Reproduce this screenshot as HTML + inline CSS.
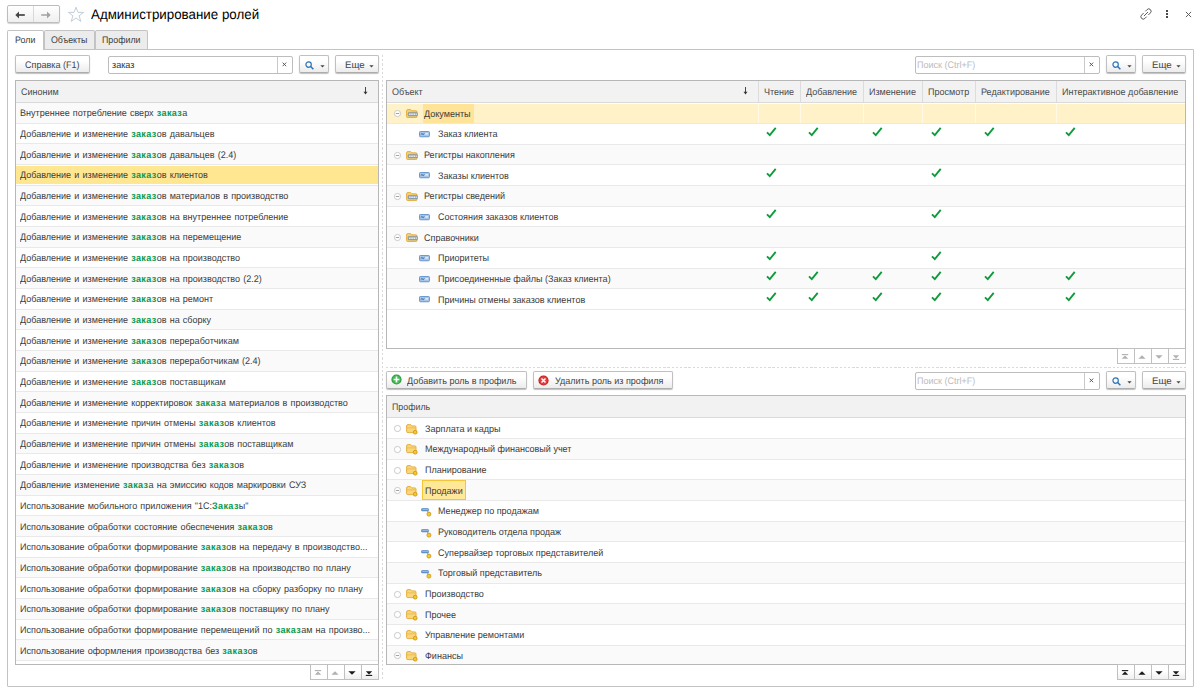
<!DOCTYPE html>
<html lang="ru"><head><meta charset="utf-8"><title>Администрирование ролей</title>
<style>
*{box-sizing:border-box;margin:0;padding:0}
html,body{width:1200px;height:689px;overflow:hidden;background:#fff}
body{font-family:"Liberation Sans",Arial,sans-serif;font-size:9.5px;color:#3c3c3c;position:relative;text-rendering:geometricPrecision}
div,span,svg{position:absolute}
b{color:#0a9a50;font-weight:bold;letter-spacing:.42px}
.x{top:50%;height:12px;line-height:12px;margin-top:-6px;white-space:nowrap;transform:scaleX(0.95);transform-origin:0 50%}
.x b{position:static}
.lw{word-spacing:.7px}
.nav{left:7px;top:5px;width:53px;height:18px;border:1px solid #bdbdbd;border-radius:2px;background:linear-gradient(#fff,#efefef);box-shadow:0 1px 1px rgba(0,0,0,.18)}
.navl{left:0;top:0;width:26px;height:16px;border-right:1px solid #d9d9d9}
.navl svg{left:7px;top:4.5px}
.navr svg{left:7px;top:4.5px}
.navr{left:26px;top:0;width:25px;height:16px}
.star{left:66.5px;top:5.5px}
.title{left:91px;top:6px;height:18px;width:300px;font-size:13.8px;color:#000}
.xt{left:0;top:0;height:18px;line-height:18px;white-space:nowrap;transform:scaleX(.967);transform-origin:0 50%}
.lnk{left:1139.5px;top:8px}
.dots{left:1165.6px;top:10px;width:3px;height:9px}
.dots i{position:absolute;left:0;width:2.3px;height:2px;background:#4a4a4a}
.dots i:nth-child(1){top:0}.dots i:nth-child(2){top:3px}.dots i:nth-child(3){top:6px}
.cls{left:1184.8px;top:10.8px}
.panel{left:7px;top:49px;width:1187px;height:638px;border:1px solid #c3c3c3;border-radius:0 0 1px 1px}
.tab{top:30px;height:19px;border:1px solid #c3c3c3;border-bottom:none;background:#ececec;border-radius:2px 2px 0 0}
.tab .x{margin-top:-5px}
.tab.on{background:#fff;border-bottom:none;height:20px}
.tab.on .x{margin-top:-6px}
.btn{border:1px solid #c0c0c0;border-radius:2px;background:linear-gradient(#fff 30%,#ececec);border-bottom-color:#adadad;box-shadow:0 1px 1px rgba(0,0,0,.25);color:#444}
.btn .x{margin-top:-4.2px}
.btn .mg{left:4.6px;top:4.6px;width:10px;height:10px}
.btn .mg svg{left:0;top:0}
.btn .ct{top:8.5px;width:5px;height:3px}
.btn .ct svg{left:0;top:0}
.btn .bi{left:3.7px;top:2.2px}
.inp{border:1px solid #bdbdbd;border-radius:2px;background:#fff}
.inp .x{margin-top:-4.6px}
.inp .val{color:#333}
.inp .ph{color:#bcbcbc}
.inp .clr{right:0;top:0;width:15px;height:16px;border-left:1px solid #c9c9c9}
.inp .clr svg{left:4.2px;top:5px}
.tbl{border:1px solid #b7b7b7;background:#fff;overflow:hidden}
.hd{background:#f2f2f2;border-bottom:1px solid #dadada;color:#4a4a4a}
.hd .x{margin-top:-4.8px}
.hd2 .x{margin-top:-4.4px}
.hd .hdv{top:0;width:1px;height:100%;background:#dcdcdc}
.hd .srt{top:6px;width:5px;height:8px}
.hd .srt svg{left:0;top:0}
.r{left:0;border-bottom:1px solid #e9e9e9;background:#fff}
.r.alt{background:#fafafa}
.r.sel{background:#fff;border-bottom-color:#e6e6ee}
.r.sel .bg{left:0;right:0;top:1px;bottom:1px;background:#ffe691}
.r.sel2{background:#fff;border-bottom-color:#e9e9ee}
.r.sel2 .bg{left:0;right:0;top:1px;bottom:0;background:#fff2c9}
.r .t{margin-top:0}
.ic{line-height:0}
.ic svg{position:static;display:block}
.cd{top:1px;bottom:0;width:1px;background:#fff9e6}
.cur{top:1px;bottom:0;background:#ffe497}
.cur2{top:0;bottom:0;background:#ffe897;border:1px solid #f5c535}
.vsep{left:382px;top:55px;width:1px;height:625px;background:repeating-linear-gradient(180deg,#dadada 0,#dadada 2.2px,transparent 2.2px,transparent 4.2px)}
.hsep{left:386px;top:367px;width:800px;height:1px;background:repeating-linear-gradient(90deg,#dadada 0,#dadada 2.4px,transparent 2.4px,transparent 4.2px)}
.sb{width:69px;height:16px}
.sbb{top:0;height:16px;border:1px solid #c0c0c0;background:#fff}
.sbb.act{background:linear-gradient(#fff 40%,#f0f0f0)}
.sbb svg{left:3.4px;top:4.5px}
</style></head>
<body>
<div class="nav"><div class="navl"><svg width="10" height="8" viewBox="0 0 10 8"><path d="M0.3 4L4 0.5V7.5z" fill="#444"/><path d="M3 4H9.8" stroke="#444" stroke-width="1.7"/></svg></div><div class="navr"><svg width="10" height="8" viewBox="0 0 10 8"><path d="M9.7 4L6 0.5V7.5z" fill="#a2a2a2"/><path d="M7 4H0.2" stroke="#a2a2a2" stroke-width="1.5"/></svg></div></div>
<svg class="star" width="18" height="17" viewBox="0 0 18 17"><path d="M9 1.2L11 6.4H16.6L12.1 9.8L13.8 15.4L9 12L4.2 15.4L5.9 9.8L1.4 6.4H7Z" fill="#fff" stroke="#bcc7d1" stroke-width="0.9" stroke-linejoin="miter"/></svg>
<div class="title"><span class="xt">Администрирование ролей</span></div>
<svg class="lnk" width="12" height="12" viewBox="0 0 13 13"><g fill="none" stroke="#555" stroke-width="1.05" stroke-linecap="round"><path d="M6.1 3.3L7.7 1.7a2.5 2.5 0 0 1 3.6 3.6L9.3 7.3"/><path d="M6.9 9.7L5.3 11.3a2.5 2.5 0 0 1 -3.6 -3.6L3.7 5.7"/><path d="M4.6 8.4L8.4 4.6"/></g></svg>
<div class="dots"><i></i><i></i><i></i></div>
<svg class="cls" width="7" height="7" viewBox="0 0 7 7"><path d="M0.9 0.9L6.1 6.1M6.1 0.9L0.9 6.1" stroke="#555" stroke-width="0.95"/></svg>
<div class="panel"></div>
<div class="tab on" style="left:7px;width:37px"><span class="x" style="left:7px;transform:scaleX(.93)">Роли</span></div>
<div class="tab" style="left:44px;width:51px"><span class="x" style="left:5.5px;transform:scaleX(.93)">Объекты</span></div>
<div class="tab" style="left:95px;width:53px"><span class="x" style="left:6px;transform:scaleX(.93)">Профили</span></div>
<div class="btn" style="left:15px;top:55px;width:75px;height:18px"><span class="x" style="left:9px;">Справка (F1)</span></div>
<div class="inp" style="left:108px;top:56px;width:185px;height:18px"><span class="x val" style="left:3px;">заказ</span><span class="clr"><svg width="5" height="5" viewBox="0 0 5 5"><path d="M0.6 0.6L4.2 4.2M4.2 0.6L0.6 4.2" stroke="#555" stroke-width="0.95"/></svg></span></div>
<div class="btn" style="left:299px;top:55px;width:30px;height:18px"><span class="mg"><svg width="10" height="10" viewBox="0 0 10 10"><circle cx="3.6" cy="3.6" r="2.7" fill="none" stroke="#2a72b5" stroke-width="1.15"/><path d="M5.6 5.6L8.4 8.3" stroke="#2a72b5" stroke-width="1.45"/></svg></span><span class="ct" style="left:20px"><svg width="5" height="3" viewBox="0 0 5 3"><path d="M0.4 0.3h4.2L2.5 2.4z" fill="#444"/></svg></span></div>
<div class="btn" style="left:335px;top:55px;width:44px;height:18px"><span class="x" style="left:9px;transform:scaleX(1.02)">Еще</span><span class="ct" style="left:32.7px"><svg width="5" height="3" viewBox="0 0 5 3"><path d="M0.4 0.3h4.2L2.5 2.4z" fill="#444"/></svg></span></div>
<div class="tbl" style="left:15px;top:80px;width:364px;height:585px">
<div class="hd" style="left:0;top:0;width:362px;height:22px"><span class="x" style="left:5px;">Синоним</span><span class="srt" style="left:346.5px"><svg width="5" height="8" viewBox="0 0 5 8"><path d="M2.5 0v6" stroke="#333" stroke-width="0.9"/><path d="M0.5 4.8h4L2.5 7.6z" fill="#333"/></svg></span></div>
<div class="r alt" style="top:22px;height:21px;width:362px"><span class="x t lw" style="left:4.0px;top:5px">Внутреннее потребление сверх <b>заказ</b>а</span></div>
<div class="r" style="top:43px;height:20px;width:362px"><span class="x t lw" style="left:4.0px;top:5px">Добавление и изменение <b>заказ</b>ов давальцев</span></div>
<div class="r alt" style="top:63px;height:21px;width:362px"><span class="x t lw" style="left:4.0px;top:6px">Добавление и изменение <b>заказ</b>ов давальцев (2.4)</span></div>
<div class="r sel" style="top:84px;height:21px;width:362px"><span class="bg"></span><span class="x t lw" style="left:4.0px;top:5px">Добавление и изменение <b>заказ</b>ов клиентов</span></div>
<div class="r alt" style="top:105px;height:20px;width:362px"><span class="x t lw" style="left:4.0px;top:5px">Добавление и изменение <b>заказ</b>ов материалов в производство</span></div>
<div class="r" style="top:125px;height:21px;width:362px"><span class="x t lw" style="left:4.0px;top:6px">Добавление и изменение <b>заказ</b>ов на внутреннее потребление</span></div>
<div class="r alt" style="top:146px;height:21px;width:362px"><span class="x t lw" style="left:4.0px;top:5px">Добавление и изменение <b>заказ</b>ов на перемещение</span></div>
<div class="r" style="top:167px;height:20px;width:362px"><span class="x t lw" style="left:4.0px;top:5px">Добавление и изменение <b>заказ</b>ов на производство</span></div>
<div class="r alt" style="top:187px;height:21px;width:362px"><span class="x t lw" style="left:4.0px;top:6px">Добавление и изменение <b>заказ</b>ов на производство (2.2)</span></div>
<div class="r" style="top:208px;height:21px;width:362px"><span class="x t lw" style="left:4.0px;top:5px">Добавление и изменение <b>заказ</b>ов на ремонт</span></div>
<div class="r alt" style="top:229px;height:20px;width:362px"><span class="x t lw" style="left:4.0px;top:5px">Добавление и изменение <b>заказ</b>ов на сборку</span></div>
<div class="r" style="top:249px;height:21px;width:362px"><span class="x t lw" style="left:4.0px;top:6px">Добавление и изменение <b>заказ</b>ов переработчикам</span></div>
<div class="r alt" style="top:270px;height:21px;width:362px"><span class="x t lw" style="left:4.0px;top:5px">Добавление и изменение <b>заказ</b>ов переработчикам (2.4)</span></div>
<div class="r" style="top:291px;height:20px;width:362px"><span class="x t lw" style="left:4.0px;top:5px">Добавление и изменение <b>заказ</b>ов поставщикам</span></div>
<div class="r alt" style="top:311px;height:21px;width:362px"><span class="x t lw" style="left:4.0px;top:6px">Добавление и изменение корректировок <b>заказ</b>а материалов в производство</span></div>
<div class="r" style="top:332px;height:21px;width:362px"><span class="x t lw" style="left:4.0px;top:5px">Добавление и изменение причин отмены <b>заказ</b>ов клиентов</span></div>
<div class="r alt" style="top:353px;height:20px;width:362px"><span class="x t lw" style="left:4.0px;top:5px">Добавление и изменение причин отмены <b>заказ</b>ов поставщикам</span></div>
<div class="r" style="top:373px;height:21px;width:362px"><span class="x t lw" style="left:4.0px;top:6px">Добавление и изменение производства без <b>заказ</b>ов</span></div>
<div class="r alt" style="top:394px;height:21px;width:362px"><span class="x t lw" style="left:4.0px;top:5px">Добавление изменение <b>заказ</b>а на эмиссию кодов маркировки СУЗ</span></div>
<div class="r" style="top:415px;height:20px;width:362px"><span class="x t lw" style="left:4.0px;top:5px">Использование мобильного приложения "1С:<b>Заказ</b>ы"</span></div>
<div class="r alt" style="top:435px;height:21px;width:362px"><span class="x t lw" style="left:4.0px;top:6px">Использование обработки состояние обеспечения <b>заказ</b>ов</span></div>
<div class="r" style="top:456px;height:21px;width:362px"><span class="x t lw" style="left:4.0px;top:5px">Использование обработки формирование <b>заказ</b>ов на передачу в производство...</span></div>
<div class="r alt" style="top:477px;height:20px;width:362px"><span class="x t lw" style="left:4.0px;top:5px">Использование обработки формирование <b>заказ</b>ов на производство по плану</span></div>
<div class="r" style="top:497px;height:21px;width:362px"><span class="x t lw" style="left:4.0px;top:6px">Использование обработки формирование <b>заказ</b>ов на сборку разборку по плану</span></div>
<div class="r alt" style="top:518px;height:21px;width:362px"><span class="x t lw" style="left:4.0px;top:5px">Использование обработки формирование <b>заказ</b>ов поставщику по плану</span></div>
<div class="r" style="top:539px;height:20px;width:362px"><span class="x t lw" style="left:4.0px;top:5px">Использование обработки формирование перемещений по <b>заказ</b>ам на произво...</span></div>
<div class="r alt" style="top:559px;height:21px;width:362px"><span class="x t lw" style="left:4.0px;top:6px">Использование оформления производства без <b>заказ</b>ов</span></div>
<div class="r" style="top:580px;height:21px;width:362px"></div>
</div>
<div class="sb" style="left:310px;top:664px"><div class="sbb" style="left:0px;width:18px"><svg width="8" height="6" viewBox="0 0 8 6" fill="#b0b0b0" stroke="#b0b0b0"><path d="M0.8 0.6h6.4" fill="none" stroke-width="1.1"/><path d="M0.8 4.8L4 1.4L7.2 4.8z" stroke="none"/></svg></div><div class="sbb" style="left:17px;width:18px"><svg width="8" height="6" viewBox="0 0 8 6" fill="#b0b0b0" stroke="#b0b0b0"><path d="M0.4 4.8L4 1.2L7.6 4.8z" stroke="none"/></svg></div><div class="sbb act" style="left:34px;width:18px"><svg width="8" height="6" viewBox="0 0 8 6" fill="#1a1a1a" stroke="#1a1a1a"><path d="M0.4 1.2L4 4.8L7.6 1.2z" stroke="none"/></svg></div><div class="sbb act" style="left:51px;width:18px"><svg width="8" height="6" viewBox="0 0 8 6" fill="#1a1a1a" stroke="#1a1a1a"><path d="M0.8 5.4h6.4" fill="none" stroke-width="1.1"/><path d="M0.8 1.2L4 4.6L7.2 1.2z" stroke="none"/></svg></div></div>
<div class="vsep"></div>
<div class="hsep"></div>
<div class="inp" style="left:915px;top:56px;width:185px;height:18px"><span class="x ph" style="left:1px;">Поиск (Ctrl+F)</span><span class="clr"><svg width="5" height="5" viewBox="0 0 5 5"><path d="M0.6 0.6L4.2 4.2M4.2 0.6L0.6 4.2" stroke="#555" stroke-width="0.95"/></svg></span></div>
<div class="btn" style="left:1106px;top:55px;width:30px;height:18px"><span class="mg"><svg width="10" height="10" viewBox="0 0 10 10"><circle cx="3.6" cy="3.6" r="2.7" fill="none" stroke="#2a72b5" stroke-width="1.15"/><path d="M5.6 5.6L8.4 8.3" stroke="#2a72b5" stroke-width="1.45"/></svg></span><span class="ct" style="left:20px"><svg width="5" height="3" viewBox="0 0 5 3"><path d="M0.4 0.3h4.2L2.5 2.4z" fill="#444"/></svg></span></div>
<div class="btn" style="left:1142px;top:55px;width:44px;height:18px"><span class="x" style="left:9px;transform:scaleX(1.02)">Еще</span><span class="ct" style="left:32.7px"><svg width="5" height="3" viewBox="0 0 5 3"><path d="M0.4 0.3h4.2L2.5 2.4z" fill="#444"/></svg></span></div>
<div class="tbl" style="left:386px;top:80px;width:800px;height:269px">
<div class="hd" style="left:0;top:0;width:798px;height:22px">
<span class="x" style="left:5px;">Объект</span>
<span class="srt" style="left:356px"><svg width="5" height="8" viewBox="0 0 5 8"><path d="M2.5 0v6" stroke="#333" stroke-width="0.9"/><path d="M0.5 4.8h4L2.5 7.6z" fill="#333"/></svg></span>
<span class="hdv" style="left:371px"></span><span class="x" style="left:377px;">Чтение</span>
<span class="hdv" style="left:413px"></span><span class="x" style="left:419px;">Добавление</span>
<span class="hdv" style="left:476px"></span><span class="x" style="left:482px;">Изменение</span>
<span class="hdv" style="left:535px"></span><span class="x" style="left:541px;">Просмотр</span>
<span class="hdv" style="left:588px"></span><span class="x" style="left:594px;">Редактирование</span>
<span class="hdv" style="left:669px"></span><span class="x" style="left:675px;">Интерактивное добавление</span>
</div>
<div class="r sel2" style="top:22px;height:21px;width:798px">
<span class="bg"></span>
<span class="ic" style="left:6px;top:6px"><svg width="9" height="9" viewBox="0 0 9 9"><circle cx="4.5" cy="4.5" r="3.1" fill="#fff" stroke="#c2c2c2" stroke-width="0.85"/><path d="M2.8 4.5h3.4" stroke="#999" stroke-width="0.9"/></svg></span><span class="ic" style="left:19px;top:6px"><svg width="12" height="9.3" viewBox="0 0 12.6 9.8"><path d="M0.6 2Q0.6 0.6 2 0.6H4.4Q5.2 0.6 5.6 1.3L6 1.9H10.4Q11.6 1.9 11.6 3.1V7.9Q11.6 9 10.4 9H1.8Q0.6 9 0.6 7.9Z" fill="#f8d16f" stroke="#e3a72e" stroke-width="0.9"/><rect x="2.2" y="3.6" width="9.8" height="3.7" rx="0.9" fill="#93a4b8" stroke="#7d8da0" stroke-width="0.6"/><path d="M3.3 5.45h1.5M5.6 5.45h1.5M7.9 5.45h1.5M10.2 5.45h1" stroke="#eef3f8" stroke-width="1.5"/></svg></span>
<span class="cur" style="left:36px;width:51px"></span>
<span class="x t" style="left:37px;top:6px">Документы</span>
<span class="cd" style="left:371px"></span>
<span class="cd" style="left:413px"></span>
<span class="cd" style="left:476px"></span>
<span class="cd" style="left:535px"></span>
<span class="cd" style="left:588px"></span>
<span class="cd" style="left:669px"></span>
</div>
<div class="r" style="top:43px;height:21px;width:798px">
<span class="ic" style="left:32px;top:7px"><svg width="11" height="7" viewBox="0 0 11 7"><rect x="0.45" y="0.45" width="10" height="5.3" rx="1" fill="#a9c6e8" stroke="#5b8cc7" stroke-width="0.9"/><path d="M1.7 3.7L2.9 2.5L4.1 3.6L5.4 2.4" stroke="#26589b" stroke-width="0.9" fill="none"/><path d="M6.3 2.9h2.9" stroke="#fff" stroke-width="1"/></svg></span><span class="x t" style="left:51px;top:5px">Заказ клиента</span>
<span class="ic" style="left:379px;top:3px"><svg width="11" height="10" viewBox="0 0 11 10"><path d="M1 5.3L3.8 8.2L9.7 0.9" fill="none" stroke="#0f9a3c" stroke-width="1.85"/></svg></span>
<span class="ic" style="left:421px;top:3px"><svg width="11" height="10" viewBox="0 0 11 10"><path d="M1 5.3L3.8 8.2L9.7 0.9" fill="none" stroke="#0f9a3c" stroke-width="1.85"/></svg></span>
<span class="ic" style="left:485px;top:3px"><svg width="11" height="10" viewBox="0 0 11 10"><path d="M1 5.3L3.8 8.2L9.7 0.9" fill="none" stroke="#0f9a3c" stroke-width="1.85"/></svg></span>
<span class="ic" style="left:544px;top:3px"><svg width="11" height="10" viewBox="0 0 11 10"><path d="M1 5.3L3.8 8.2L9.7 0.9" fill="none" stroke="#0f9a3c" stroke-width="1.85"/></svg></span>
<span class="ic" style="left:597px;top:3px"><svg width="11" height="10" viewBox="0 0 11 10"><path d="M1 5.3L3.8 8.2L9.7 0.9" fill="none" stroke="#0f9a3c" stroke-width="1.85"/></svg></span>
<span class="ic" style="left:678px;top:3px"><svg width="11" height="10" viewBox="0 0 11 10"><path d="M1 5.3L3.8 8.2L9.7 0.9" fill="none" stroke="#0f9a3c" stroke-width="1.85"/></svg></span>
</div>
<div class="r alt" style="top:64px;height:20px;width:798px">
<span class="ic" style="left:6px;top:6px"><svg width="9" height="9" viewBox="0 0 9 9"><circle cx="4.5" cy="4.5" r="3.1" fill="#fff" stroke="#c2c2c2" stroke-width="0.85"/><path d="M2.8 4.5h3.4" stroke="#999" stroke-width="0.9"/></svg></span><span class="ic" style="left:19px;top:6px"><svg width="12" height="9.3" viewBox="0 0 12.6 9.8"><path d="M0.6 2Q0.6 0.6 2 0.6H4.4Q5.2 0.6 5.6 1.3L6 1.9H10.4Q11.6 1.9 11.6 3.1V7.9Q11.6 9 10.4 9H1.8Q0.6 9 0.6 7.9Z" fill="#f8d16f" stroke="#e3a72e" stroke-width="0.9"/><rect x="2.2" y="3.6" width="9.8" height="3.7" rx="0.9" fill="#93a4b8" stroke="#7d8da0" stroke-width="0.6"/><path d="M3.3 5.45h1.5M5.6 5.45h1.5M7.9 5.45h1.5M10.2 5.45h1" stroke="#eef3f8" stroke-width="1.5"/></svg></span>
<span class="x t" style="left:37px;top:5px">Регистры накопления</span>
</div>
<div class="r" style="top:84px;height:21px;width:798px">
<span class="ic" style="left:32px;top:7px"><svg width="11" height="7" viewBox="0 0 11 7"><rect x="0.45" y="0.45" width="10" height="5.3" rx="1" fill="#a9c6e8" stroke="#5b8cc7" stroke-width="0.9"/><path d="M1.7 3.7L2.9 2.5L4.1 3.6L5.4 2.4" stroke="#26589b" stroke-width="0.9" fill="none"/><path d="M6.3 2.9h2.9" stroke="#fff" stroke-width="1"/></svg></span><span class="x t" style="left:51px;top:6px">Заказы клиентов</span>
<span class="ic" style="left:379px;top:3px"><svg width="11" height="10" viewBox="0 0 11 10"><path d="M1 5.3L3.8 8.2L9.7 0.9" fill="none" stroke="#0f9a3c" stroke-width="1.85"/></svg></span>
<span class="ic" style="left:544px;top:3px"><svg width="11" height="10" viewBox="0 0 11 10"><path d="M1 5.3L3.8 8.2L9.7 0.9" fill="none" stroke="#0f9a3c" stroke-width="1.85"/></svg></span>
</div>
<div class="r alt" style="top:105px;height:21px;width:798px">
<span class="ic" style="left:6px;top:6px"><svg width="9" height="9" viewBox="0 0 9 9"><circle cx="4.5" cy="4.5" r="3.1" fill="#fff" stroke="#c2c2c2" stroke-width="0.85"/><path d="M2.8 4.5h3.4" stroke="#999" stroke-width="0.9"/></svg></span><span class="ic" style="left:19px;top:6px"><svg width="12" height="9.3" viewBox="0 0 12.6 9.8"><path d="M0.6 2Q0.6 0.6 2 0.6H4.4Q5.2 0.6 5.6 1.3L6 1.9H10.4Q11.6 1.9 11.6 3.1V7.9Q11.6 9 10.4 9H1.8Q0.6 9 0.6 7.9Z" fill="#f8d16f" stroke="#e3a72e" stroke-width="0.9"/><rect x="2.2" y="3.6" width="9.8" height="3.7" rx="0.9" fill="#93a4b8" stroke="#7d8da0" stroke-width="0.6"/><path d="M3.3 5.45h1.5M5.6 5.45h1.5M7.9 5.45h1.5M10.2 5.45h1" stroke="#eef3f8" stroke-width="1.5"/></svg></span>
<span class="x t" style="left:37px;top:5px">Регистры сведений</span>
</div>
<div class="r" style="top:126px;height:20px;width:798px">
<span class="ic" style="left:32px;top:7px"><svg width="11" height="7" viewBox="0 0 11 7"><rect x="0.45" y="0.45" width="10" height="5.3" rx="1" fill="#a9c6e8" stroke="#5b8cc7" stroke-width="0.9"/><path d="M1.7 3.7L2.9 2.5L4.1 3.6L5.4 2.4" stroke="#26589b" stroke-width="0.9" fill="none"/><path d="M6.3 2.9h2.9" stroke="#fff" stroke-width="1"/></svg></span><span class="x t" style="left:51px;top:5px">Состояния заказов клиентов</span>
<span class="ic" style="left:379px;top:2px"><svg width="11" height="10" viewBox="0 0 11 10"><path d="M1 5.3L3.8 8.2L9.7 0.9" fill="none" stroke="#0f9a3c" stroke-width="1.85"/></svg></span>
<span class="ic" style="left:544px;top:2px"><svg width="11" height="10" viewBox="0 0 11 10"><path d="M1 5.3L3.8 8.2L9.7 0.9" fill="none" stroke="#0f9a3c" stroke-width="1.85"/></svg></span>
</div>
<div class="r alt" style="top:146px;height:21px;width:798px">
<span class="ic" style="left:6px;top:6px"><svg width="9" height="9" viewBox="0 0 9 9"><circle cx="4.5" cy="4.5" r="3.1" fill="#fff" stroke="#c2c2c2" stroke-width="0.85"/><path d="M2.8 4.5h3.4" stroke="#999" stroke-width="0.9"/></svg></span><span class="ic" style="left:19px;top:6px"><svg width="12" height="9.3" viewBox="0 0 12.6 9.8"><path d="M0.6 2Q0.6 0.6 2 0.6H4.4Q5.2 0.6 5.6 1.3L6 1.9H10.4Q11.6 1.9 11.6 3.1V7.9Q11.6 9 10.4 9H1.8Q0.6 9 0.6 7.9Z" fill="#f8d16f" stroke="#e3a72e" stroke-width="0.9"/><rect x="2.2" y="3.6" width="9.8" height="3.7" rx="0.9" fill="#93a4b8" stroke="#7d8da0" stroke-width="0.6"/><path d="M3.3 5.45h1.5M5.6 5.45h1.5M7.9 5.45h1.5M10.2 5.45h1" stroke="#eef3f8" stroke-width="1.5"/></svg></span>
<span class="x t" style="left:37px;top:6px">Справочники</span>
</div>
<div class="r" style="top:167px;height:21px;width:798px">
<span class="ic" style="left:32px;top:7px"><svg width="11" height="7" viewBox="0 0 11 7"><rect x="0.45" y="0.45" width="10" height="5.3" rx="1" fill="#a9c6e8" stroke="#5b8cc7" stroke-width="0.9"/><path d="M1.7 3.7L2.9 2.5L4.1 3.6L5.4 2.4" stroke="#26589b" stroke-width="0.9" fill="none"/><path d="M6.3 2.9h2.9" stroke="#fff" stroke-width="1"/></svg></span><span class="x t" style="left:51px;top:5px">Приоритеты</span>
<span class="ic" style="left:379px;top:3px"><svg width="11" height="10" viewBox="0 0 11 10"><path d="M1 5.3L3.8 8.2L9.7 0.9" fill="none" stroke="#0f9a3c" stroke-width="1.85"/></svg></span>
<span class="ic" style="left:544px;top:3px"><svg width="11" height="10" viewBox="0 0 11 10"><path d="M1 5.3L3.8 8.2L9.7 0.9" fill="none" stroke="#0f9a3c" stroke-width="1.85"/></svg></span>
</div>
<div class="r alt" style="top:188px;height:20px;width:798px">
<span class="ic" style="left:32px;top:7px"><svg width="11" height="7" viewBox="0 0 11 7"><rect x="0.45" y="0.45" width="10" height="5.3" rx="1" fill="#a9c6e8" stroke="#5b8cc7" stroke-width="0.9"/><path d="M1.7 3.7L2.9 2.5L4.1 3.6L5.4 2.4" stroke="#26589b" stroke-width="0.9" fill="none"/><path d="M6.3 2.9h2.9" stroke="#fff" stroke-width="1"/></svg></span><span class="x t" style="left:51px;top:5px">Присоединенные файлы (Заказ клиента)</span>
<span class="ic" style="left:379px;top:2px"><svg width="11" height="10" viewBox="0 0 11 10"><path d="M1 5.3L3.8 8.2L9.7 0.9" fill="none" stroke="#0f9a3c" stroke-width="1.85"/></svg></span>
<span class="ic" style="left:421px;top:2px"><svg width="11" height="10" viewBox="0 0 11 10"><path d="M1 5.3L3.8 8.2L9.7 0.9" fill="none" stroke="#0f9a3c" stroke-width="1.85"/></svg></span>
<span class="ic" style="left:485px;top:2px"><svg width="11" height="10" viewBox="0 0 11 10"><path d="M1 5.3L3.8 8.2L9.7 0.9" fill="none" stroke="#0f9a3c" stroke-width="1.85"/></svg></span>
<span class="ic" style="left:544px;top:2px"><svg width="11" height="10" viewBox="0 0 11 10"><path d="M1 5.3L3.8 8.2L9.7 0.9" fill="none" stroke="#0f9a3c" stroke-width="1.85"/></svg></span>
<span class="ic" style="left:597px;top:2px"><svg width="11" height="10" viewBox="0 0 11 10"><path d="M1 5.3L3.8 8.2L9.7 0.9" fill="none" stroke="#0f9a3c" stroke-width="1.85"/></svg></span>
<span class="ic" style="left:678px;top:2px"><svg width="11" height="10" viewBox="0 0 11 10"><path d="M1 5.3L3.8 8.2L9.7 0.9" fill="none" stroke="#0f9a3c" stroke-width="1.85"/></svg></span>
</div>
<div class="r" style="top:208px;height:21px;width:798px">
<span class="ic" style="left:32px;top:7px"><svg width="11" height="7" viewBox="0 0 11 7"><rect x="0.45" y="0.45" width="10" height="5.3" rx="1" fill="#a9c6e8" stroke="#5b8cc7" stroke-width="0.9"/><path d="M1.7 3.7L2.9 2.5L4.1 3.6L5.4 2.4" stroke="#26589b" stroke-width="0.9" fill="none"/><path d="M6.3 2.9h2.9" stroke="#fff" stroke-width="1"/></svg></span><span class="x t" style="left:51px;top:6px">Причины отмены заказов клиентов</span>
<span class="ic" style="left:379px;top:3px"><svg width="11" height="10" viewBox="0 0 11 10"><path d="M1 5.3L3.8 8.2L9.7 0.9" fill="none" stroke="#0f9a3c" stroke-width="1.85"/></svg></span>
<span class="ic" style="left:421px;top:3px"><svg width="11" height="10" viewBox="0 0 11 10"><path d="M1 5.3L3.8 8.2L9.7 0.9" fill="none" stroke="#0f9a3c" stroke-width="1.85"/></svg></span>
<span class="ic" style="left:485px;top:3px"><svg width="11" height="10" viewBox="0 0 11 10"><path d="M1 5.3L3.8 8.2L9.7 0.9" fill="none" stroke="#0f9a3c" stroke-width="1.85"/></svg></span>
<span class="ic" style="left:544px;top:3px"><svg width="11" height="10" viewBox="0 0 11 10"><path d="M1 5.3L3.8 8.2L9.7 0.9" fill="none" stroke="#0f9a3c" stroke-width="1.85"/></svg></span>
<span class="ic" style="left:597px;top:3px"><svg width="11" height="10" viewBox="0 0 11 10"><path d="M1 5.3L3.8 8.2L9.7 0.9" fill="none" stroke="#0f9a3c" stroke-width="1.85"/></svg></span>
<span class="ic" style="left:678px;top:3px"><svg width="11" height="10" viewBox="0 0 11 10"><path d="M1 5.3L3.8 8.2L9.7 0.9" fill="none" stroke="#0f9a3c" stroke-width="1.85"/></svg></span>
</div>
</div>
<div class="sb" style="left:1117px;top:348px"><div class="sbb" style="left:0px;width:18px"><svg width="8" height="6" viewBox="0 0 8 6" fill="#b0b0b0" stroke="#b0b0b0"><path d="M0.8 0.6h6.4" fill="none" stroke-width="1.1"/><path d="M0.8 4.8L4 1.4L7.2 4.8z" stroke="none"/></svg></div><div class="sbb" style="left:17px;width:18px"><svg width="8" height="6" viewBox="0 0 8 6" fill="#b0b0b0" stroke="#b0b0b0"><path d="M0.4 4.8L4 1.2L7.6 4.8z" stroke="none"/></svg></div><div class="sbb" style="left:34px;width:18px"><svg width="8" height="6" viewBox="0 0 8 6" fill="#b0b0b0" stroke="#b0b0b0"><path d="M0.4 1.2L4 4.8L7.6 1.2z" stroke="none"/></svg></div><div class="sbb" style="left:51px;width:18px"><svg width="8" height="6" viewBox="0 0 8 6" fill="#b0b0b0" stroke="#b0b0b0"><path d="M0.8 5.4h6.4" fill="none" stroke-width="1.1"/><path d="M0.8 1.2L4 4.6L7.2 1.2z" stroke="none"/></svg></div></div>
<div class="btn" style="left:386px;top:371px;width:141px;height:18px"><svg class="bi" width="11" height="11" viewBox="0 0 11 11"><circle cx="5.5" cy="5.5" r="5.1" fill="#2c9b3c"/><circle cx="5.5" cy="5.5" r="4.2" fill="#45b755"/><path d="M5.5 2.6v5.8M2.6 5.5h5.8" stroke="#fff" stroke-width="1.7"/></svg><span class="x" style="left:19.8px;">Добавить роль в профиль</span></div>
<div class="btn" style="left:533px;top:371px;width:140px;height:18px"><svg class="bi" style="left:4.3px;top:2.7px" width="11" height="11" viewBox="0 0 11 11"><circle cx="5.5" cy="5.5" r="5.1" fill="#c41c1c"/><circle cx="5.5" cy="5.5" r="4.2" fill="#e33d3d"/><path d="M3.5 3.5l4 4M7.5 3.5L3.5 7.5" stroke="#fff" stroke-width="1.5"/></svg><span class="x" style="left:20.6px;">Удалить роль из профиля</span></div>
<div class="inp" style="left:915px;top:372px;width:185px;height:18px"><span class="x ph" style="left:1px;">Поиск (Ctrl+F)</span><span class="clr"><svg width="5" height="5" viewBox="0 0 5 5"><path d="M0.6 0.6L4.2 4.2M4.2 0.6L0.6 4.2" stroke="#555" stroke-width="0.95"/></svg></span></div>
<div class="btn" style="left:1106px;top:371px;width:30px;height:18px"><span class="mg"><svg width="10" height="10" viewBox="0 0 10 10"><circle cx="3.6" cy="3.6" r="2.7" fill="none" stroke="#2a72b5" stroke-width="1.15"/><path d="M5.6 5.6L8.4 8.3" stroke="#2a72b5" stroke-width="1.45"/></svg></span><span class="ct" style="left:20px"><svg width="5" height="3" viewBox="0 0 5 3"><path d="M0.4 0.3h4.2L2.5 2.4z" fill="#444"/></svg></span></div>
<div class="btn" style="left:1142px;top:371px;width:44px;height:18px"><span class="x" style="left:9px;transform:scaleX(1.02)">Еще</span><span class="ct" style="left:32.7px"><svg width="5" height="3" viewBox="0 0 5 3"><path d="M0.4 0.3h4.2L2.5 2.4z" fill="#444"/></svg></span></div>
<div class="tbl" style="left:386px;top:395px;width:800px;height:270px">
<div class="hd hd2" style="left:0;top:0;width:798px;height:22px"><span class="x" style="left:5px;transform:scaleX(.93)">Профиль</span></div>
<div class="r" style="top:22px;height:21px;width:798px">
<span class="ic" style="left:6px;top:6px"><svg width="9" height="9" viewBox="0 0 9 9"><circle cx="4.5" cy="4.5" r="3.1" fill="#fff" stroke="#c2c2c2" stroke-width="0.85"/></svg></span><span class="ic" style="left:19px;top:6px"><svg width="12" height="11" viewBox="0 0 12 11"><path d="M0.6 2Q0.6 0.6 2 0.6H4.2Q5 0.6 5.4 1.3L5.8 1.9H8.8Q10 1.9 10 3.1V7.4Q10 8.6 8.8 8.6H1.8Q0.6 8.6 0.6 7.4Z" fill="#f9d67a" stroke="#e3a935" stroke-width="0.9"/><path d="M1 3.9H9.6" stroke="#e6b347" stroke-width="0.7"/><circle cx="9.2" cy="8.2" r="1.9" fill="#f6c730" stroke="#c99312" stroke-width="0.8"/></svg></span>
<span class="x t" style="left:37.5px;top:6px">Зарплата и кадры</span>
</div>
<div class="r alt" style="top:43px;height:21px;width:798px">
<span class="ic" style="left:6px;top:6px"><svg width="9" height="9" viewBox="0 0 9 9"><circle cx="4.5" cy="4.5" r="3.1" fill="#fff" stroke="#c2c2c2" stroke-width="0.85"/></svg></span><span class="ic" style="left:19px;top:5px"><svg width="12" height="11" viewBox="0 0 12 11"><path d="M0.6 2Q0.6 0.6 2 0.6H4.2Q5 0.6 5.4 1.3L5.8 1.9H8.8Q10 1.9 10 3.1V7.4Q10 8.6 8.8 8.6H1.8Q0.6 8.6 0.6 7.4Z" fill="#f9d67a" stroke="#e3a935" stroke-width="0.9"/><path d="M1 3.9H9.6" stroke="#e6b347" stroke-width="0.7"/><circle cx="9.2" cy="8.2" r="1.9" fill="#f6c730" stroke="#c99312" stroke-width="0.8"/></svg></span>
<span class="x t" style="left:37.5px;top:5px">Международный финансовый учет</span>
</div>
<div class="r" style="top:64px;height:20px;width:798px">
<span class="ic" style="left:6px;top:6px"><svg width="9" height="9" viewBox="0 0 9 9"><circle cx="4.5" cy="4.5" r="3.1" fill="#fff" stroke="#c2c2c2" stroke-width="0.85"/></svg></span><span class="ic" style="left:19px;top:5px"><svg width="12" height="11" viewBox="0 0 12 11"><path d="M0.6 2Q0.6 0.6 2 0.6H4.2Q5 0.6 5.4 1.3L5.8 1.9H8.8Q10 1.9 10 3.1V7.4Q10 8.6 8.8 8.6H1.8Q0.6 8.6 0.6 7.4Z" fill="#f9d67a" stroke="#e3a935" stroke-width="0.9"/><path d="M1 3.9H9.6" stroke="#e6b347" stroke-width="0.7"/><circle cx="9.2" cy="8.2" r="1.9" fill="#f6c730" stroke="#c99312" stroke-width="0.8"/></svg></span>
<span class="x t" style="left:37.5px;top:5px">Планирование</span>
</div>
<div class="r alt" style="top:84px;height:21px;width:798px">
<span class="ic" style="left:6px;top:6px"><svg width="9" height="9" viewBox="0 0 9 9"><circle cx="4.5" cy="4.5" r="3.1" fill="#fff" stroke="#c2c2c2" stroke-width="0.85"/><path d="M2.8 4.5h3.4" stroke="#999" stroke-width="0.9"/></svg></span><span class="ic" style="left:19px;top:6px"><svg width="12" height="11" viewBox="0 0 12 11"><path d="M0.6 2Q0.6 0.6 2 0.6H4.2Q5 0.6 5.4 1.3L5.8 1.9H8.8Q10 1.9 10 3.1V7.4Q10 8.6 8.8 8.6H1.8Q0.6 8.6 0.6 7.4Z" fill="#f9d67a" stroke="#e3a935" stroke-width="0.9"/><path d="M1 3.9H9.6" stroke="#e6b347" stroke-width="0.7"/><circle cx="9.2" cy="8.2" r="1.9" fill="#f6c730" stroke="#c99312" stroke-width="0.8"/></svg></span>
<span class="cur2" style="left:35px;width:44px"></span>
<span class="x t" style="left:37.5px;top:6px">Продажи</span>
</div>
<div class="r" style="top:105px;height:21px;width:798px">
<span class="ic" style="left:34px;top:7px"><svg width="11" height="9" viewBox="0 0 11 9"><rect x="0.4" y="0.5" width="7.2" height="2.4" rx="0.9" fill="#6d9bd1" stroke="#4a7dba" stroke-width="0.6"/><path d="M1.4 1.5h5.6" stroke="#a9c8ea" stroke-width="0.6"/><path d="M6.6 3.2L7.6 5" stroke="#7f7350" stroke-width="0.8"/><circle cx="7.9" cy="6.1" r="2" fill="#f6c730" stroke="#c99312" stroke-width="0.8"/></svg></span><span class="x t" style="left:51px;top:5px">Менеджер по продажам</span>
</div>
<div class="r alt" style="top:126px;height:20px;width:798px">
<span class="ic" style="left:34px;top:7px"><svg width="11" height="9" viewBox="0 0 11 9"><rect x="0.4" y="0.5" width="7.2" height="2.4" rx="0.9" fill="#6d9bd1" stroke="#4a7dba" stroke-width="0.6"/><path d="M1.4 1.5h5.6" stroke="#a9c8ea" stroke-width="0.6"/><path d="M6.6 3.2L7.6 5" stroke="#7f7350" stroke-width="0.8"/><circle cx="7.9" cy="6.1" r="2" fill="#f6c730" stroke="#c99312" stroke-width="0.8"/></svg></span><span class="x t" style="left:51px;top:5px">Руководитель отдела продаж</span>
</div>
<div class="r" style="top:146px;height:21px;width:798px">
<span class="ic" style="left:34px;top:8px"><svg width="11" height="9" viewBox="0 0 11 9"><rect x="0.4" y="0.5" width="7.2" height="2.4" rx="0.9" fill="#6d9bd1" stroke="#4a7dba" stroke-width="0.6"/><path d="M1.4 1.5h5.6" stroke="#a9c8ea" stroke-width="0.6"/><path d="M6.6 3.2L7.6 5" stroke="#7f7350" stroke-width="0.8"/><circle cx="7.9" cy="6.1" r="2" fill="#f6c730" stroke="#c99312" stroke-width="0.8"/></svg></span><span class="x t" style="left:51px;top:6px">Супервайзер торговых представителей</span>
</div>
<div class="r alt" style="top:167px;height:21px;width:798px">
<span class="ic" style="left:34px;top:7px"><svg width="11" height="9" viewBox="0 0 11 9"><rect x="0.4" y="0.5" width="7.2" height="2.4" rx="0.9" fill="#6d9bd1" stroke="#4a7dba" stroke-width="0.6"/><path d="M1.4 1.5h5.6" stroke="#a9c8ea" stroke-width="0.6"/><path d="M6.6 3.2L7.6 5" stroke="#7f7350" stroke-width="0.8"/><circle cx="7.9" cy="6.1" r="2" fill="#f6c730" stroke="#c99312" stroke-width="0.8"/></svg></span><span class="x t" style="left:51px;top:5px">Торговый представитель</span>
</div>
<div class="r" style="top:188px;height:20px;width:798px">
<span class="ic" style="left:6px;top:6px"><svg width="9" height="9" viewBox="0 0 9 9"><circle cx="4.5" cy="4.5" r="3.1" fill="#fff" stroke="#c2c2c2" stroke-width="0.85"/></svg></span><span class="ic" style="left:19px;top:5px"><svg width="12" height="11" viewBox="0 0 12 11"><path d="M0.6 2Q0.6 0.6 2 0.6H4.2Q5 0.6 5.4 1.3L5.8 1.9H8.8Q10 1.9 10 3.1V7.4Q10 8.6 8.8 8.6H1.8Q0.6 8.6 0.6 7.4Z" fill="#f9d67a" stroke="#e3a935" stroke-width="0.9"/><path d="M1 3.9H9.6" stroke="#e6b347" stroke-width="0.7"/><circle cx="9.2" cy="8.2" r="1.9" fill="#f6c730" stroke="#c99312" stroke-width="0.8"/></svg></span>
<span class="x t" style="left:37.5px;top:5px">Производство</span>
</div>
<div class="r alt" style="top:208px;height:21px;width:798px">
<span class="ic" style="left:6px;top:6px"><svg width="9" height="9" viewBox="0 0 9 9"><circle cx="4.5" cy="4.5" r="3.1" fill="#fff" stroke="#c2c2c2" stroke-width="0.85"/></svg></span><span class="ic" style="left:19px;top:6px"><svg width="12" height="11" viewBox="0 0 12 11"><path d="M0.6 2Q0.6 0.6 2 0.6H4.2Q5 0.6 5.4 1.3L5.8 1.9H8.8Q10 1.9 10 3.1V7.4Q10 8.6 8.8 8.6H1.8Q0.6 8.6 0.6 7.4Z" fill="#f9d67a" stroke="#e3a935" stroke-width="0.9"/><path d="M1 3.9H9.6" stroke="#e6b347" stroke-width="0.7"/><circle cx="9.2" cy="8.2" r="1.9" fill="#f6c730" stroke="#c99312" stroke-width="0.8"/></svg></span>
<span class="x t" style="left:37.5px;top:6px">Прочее</span>
</div>
<div class="r" style="top:229px;height:21px;width:798px">
<span class="ic" style="left:6px;top:6px"><svg width="9" height="9" viewBox="0 0 9 9"><circle cx="4.5" cy="4.5" r="3.1" fill="#fff" stroke="#c2c2c2" stroke-width="0.85"/></svg></span><span class="ic" style="left:19px;top:5px"><svg width="12" height="11" viewBox="0 0 12 11"><path d="M0.6 2Q0.6 0.6 2 0.6H4.2Q5 0.6 5.4 1.3L5.8 1.9H8.8Q10 1.9 10 3.1V7.4Q10 8.6 8.8 8.6H1.8Q0.6 8.6 0.6 7.4Z" fill="#f9d67a" stroke="#e3a935" stroke-width="0.9"/><path d="M1 3.9H9.6" stroke="#e6b347" stroke-width="0.7"/><circle cx="9.2" cy="8.2" r="1.9" fill="#f6c730" stroke="#c99312" stroke-width="0.8"/></svg></span>
<span class="x t" style="left:37.5px;top:5px">Управление ремонтами</span>
</div>
<div class="r alt" style="top:250px;height:20px;width:798px">
<span class="ic" style="left:6px;top:5px"><svg width="9" height="9" viewBox="0 0 9 9"><circle cx="4.5" cy="4.5" r="3.1" fill="#fff" stroke="#c2c2c2" stroke-width="0.85"/><path d="M2.8 4.5h3.4" stroke="#999" stroke-width="0.9"/></svg></span><span class="ic" style="left:19px;top:5px"><svg width="12" height="11" viewBox="0 0 12 11"><path d="M0.6 2Q0.6 0.6 2 0.6H4.2Q5 0.6 5.4 1.3L5.8 1.9H8.8Q10 1.9 10 3.1V7.4Q10 8.6 8.8 8.6H1.8Q0.6 8.6 0.6 7.4Z" fill="#f9d67a" stroke="#e3a935" stroke-width="0.9"/><path d="M1 3.9H9.6" stroke="#e6b347" stroke-width="0.7"/><circle cx="9.2" cy="8.2" r="1.9" fill="#f6c730" stroke="#c99312" stroke-width="0.8"/></svg></span>
<span class="x t" style="left:37.5px;top:5px">Финансы</span>
</div>
</div>
<div class="sb" style="left:1117px;top:664px"><div class="sbb act" style="left:0px;width:18px"><svg width="8" height="6" viewBox="0 0 8 6" fill="#1a1a1a" stroke="#1a1a1a"><path d="M0.8 0.6h6.4" fill="none" stroke-width="1.1"/><path d="M0.8 4.8L4 1.4L7.2 4.8z" stroke="none"/></svg></div><div class="sbb act" style="left:17px;width:18px"><svg width="8" height="6" viewBox="0 0 8 6" fill="#1a1a1a" stroke="#1a1a1a"><path d="M0.4 4.8L4 1.2L7.6 4.8z" stroke="none"/></svg></div><div class="sbb act" style="left:34px;width:18px"><svg width="8" height="6" viewBox="0 0 8 6" fill="#1a1a1a" stroke="#1a1a1a"><path d="M0.4 1.2L4 4.8L7.6 1.2z" stroke="none"/></svg></div><div class="sbb act" style="left:51px;width:18px"><svg width="8" height="6" viewBox="0 0 8 6" fill="#1a1a1a" stroke="#1a1a1a"><path d="M0.8 5.4h6.4" fill="none" stroke-width="1.1"/><path d="M0.8 1.2L4 4.6L7.2 1.2z" stroke="none"/></svg></div></div>
</body></html>
